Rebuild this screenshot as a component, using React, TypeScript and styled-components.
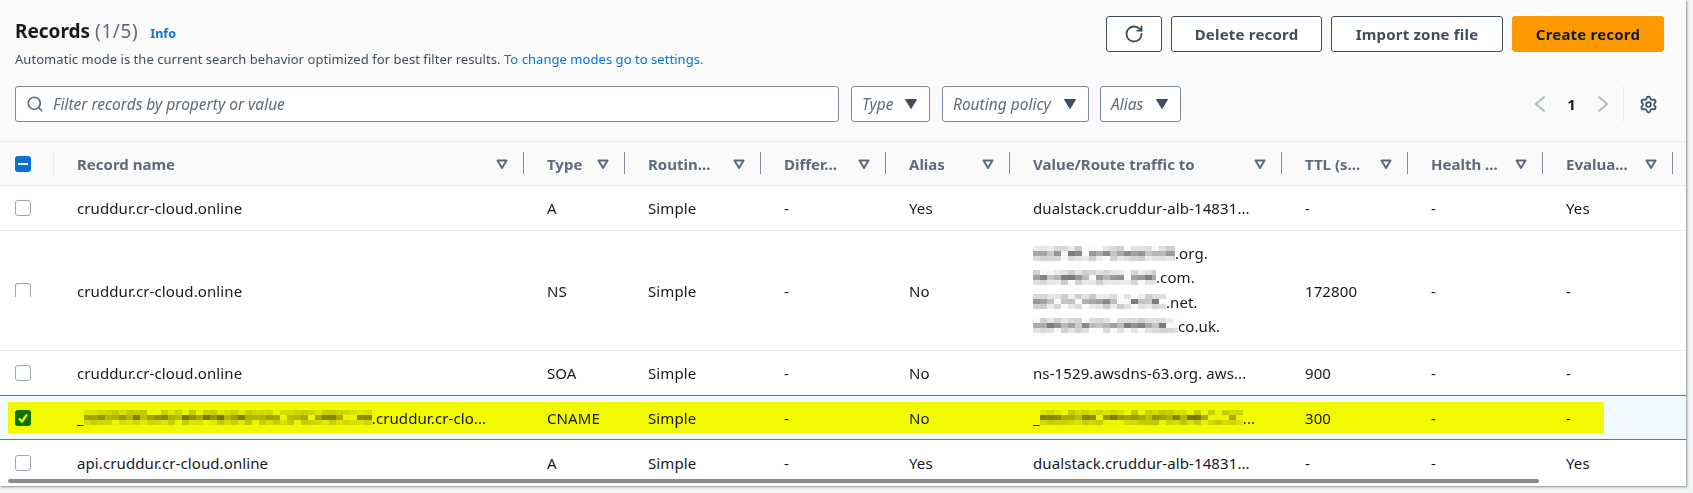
import { Search, RotateCw, Settings } from "lucide-react";
import styled, { createGlobalStyle } from "styled-components";

const GlobalStyle = createGlobalStyle`
  html, body {
    margin: 0;
    height: 493px;
    overflow: hidden;
    background: #f2f3f3;
    font-family: "Noto Sans", "Open Sans", sans-serif;
    color: #16191f;
  }
`;

const COLUMNS = "54px 470px 101px 136px 125px 124px 272px 126px 135px 130px 13px";

const headers = [
  { label: "Record name" },
  { label: "Type" },
  { label: "Routin..." },
  { label: "Differ..." },
  { label: "Alias" },
  { label: "Value/Route traffic to" },
  { label: "TTL (s..." },
  { label: "Health ..." },
  { label: "Evalua..." },
];

// pseudo random blocks, stands in for the blurred out parts of the screenshot
function Redacted({ width, seed }: { width: number; seed: number }) {
  const cell = 7;
  const cols = Math.ceil(width / cell);
  const blocks = [];
  for (let r = 0; r < 3; r++) {
    for (let c = 0; c < cols; c++) {
      const v = Math.abs(Math.sin(seed * 13.7 + c * 12.9898 + r * 78.233) * 43758.5453) % 1;
      const base = r === 1 ? 0.14 : 0.04;
      const range = r === 1 ? 0.4 : 0.16;
      blocks.push(<rect key={`${r}-${c}`} x={c * cell} y={r * 5} width={cell} height={5} fill="#000" opacity={v < 0.15 ? 0.02 : base + v * range} />);
    }
  }
  return (
    <MosaicSvg width={width} height={15} viewBox={`0 0 ${width} 15`}>
      {blocks}
    </MosaicSvg>
  );
}

function FilterIcon() {
  return (
    <SortSvg width="14" height="14" viewBox="0 0 14 14">
      <path d="M2.5 3.5h9L7 11z" fill="none" stroke="#5f6b7a" strokeWidth="2" strokeLinejoin="round" />
    </SortSvg>
  );
}

function Caret() {
  return (
    <svg width="14" height="12" viewBox="0 0 14 12">
      <path d="M1.5 1.5h11L7 10.5z" fill="#414d5c" stroke="#414d5c" strokeLinejoin="round" />
    </svg>
  );
}

function Chevron({ flip }: { flip?: boolean }) {
  return (
    <svg width="12" height="18" viewBox="0 0 12 18">
      <path d={flip ? "M1.5 1.5L10 9l-8.5 7.5" : "M10.5 1.5L2 9l8.5 7.5"} fill="none" stroke="#b0bcbe" strokeWidth="2" />
    </svg>
  );
}

function Check() {
  return (
    <svg width="12" height="12" viewBox="0 0 12 12">
      <path d="M2 6.5l3 3 5-7" fill="none" stroke="#fff" strokeWidth="2.2" />
    </svg>
  );
}

export default function App() {
  return (
    <>
      <GlobalStyle />
      <Panel>
        <Header>
          <TopRow>
            <div>
              <TitleLine>
                <Title>
                  Records <Count>(1/5)</Count>
                </Title>
                <InfoLink>Info</InfoLink>
              </TitleLine>
              <Description>
                Automatic mode is the current search behavior optimized for best filter results. <a>To change modes go to settings.</a>
              </Description>
            </div>
            <Actions>
              <Button $width={56}>
                <RotateCw size={20} strokeWidth={2.2} />
              </Button>
              <Button $width={151}>Delete record</Button>
              <Button $width={172}>Import zone file</Button>
              <Button $width={152} $primary>
                Create record
              </Button>
            </Actions>
          </TopRow>
          <FilterRow>
            <SearchBox>
              <Search size={18} strokeWidth={2.2} color="#5f6b7a" />
              <span>Filter records by property or value</span>
            </SearchBox>
            <Select $width={79}>
              Type <Caret />
            </Select>
            <Select $width={147}>
              Routing policy <Caret />
            </Select>
            <Select $width={81} $left={-1}>
              Alias <Caret />
            </Select>
            <Pager>
              <Chevron />
              <PageNumber>1</PageNumber>
              <Chevron flip />
              <PagerDivider />
              <Settings size={19} strokeWidth={2.2} color="#414d5c" />
            </Pager>
          </FilterRow>
        </Header>

        <Table>
          <HeadRow>
            <CheckCell $divider>
              <CheckBox $state="partial">
                <Dash />
              </CheckBox>
            </CheckCell>
            {headers.map((h) => (
              <HeadCell key={h.label}>
                <HeadLabel>{h.label}</HeadLabel>
                <FilterIcon />
              </HeadCell>
            ))}
          </HeadRow>

          <Row $height={45}>
            <CheckCell>
              <CheckBox />
            </CheckCell>
            <Cell>cruddur.cr-cloud.online</Cell>
            <Cell>A</Cell>
            <Cell>Simple</Cell>
            <Cell>-</Cell>
            <Cell>Yes</Cell>
            <Cell>dualstack.cruddur-alb-14831...</Cell>
            <Cell>-</Cell>
            <Cell>-</Cell>
            <Cell>Yes</Cell>
          </Row>

          <Row $height={120}>
            <CheckCell>
              <CheckBox $clipped />
            </CheckCell>
            <Cell>cruddur.cr-cloud.online</Cell>
            <Cell>NS</Cell>
            <Cell>Simple</Cell>
            <Cell>-</Cell>
            <Cell>No</Cell>
            <Cell>
              <ValueList>
                <li>
                  <Redacted width={142} seed={1} />.org.
                </li>
                <li>
                  <Redacted width={123} seed={2} />.com.
                </li>
                <li>
                  <Redacted width={133} seed={3} />.net.
                </li>
                <li>
                  <Redacted width={145} seed={4} />co.uk.
                </li>
              </ValueList>
            </Cell>
            <Cell>172800</Cell>
            <Cell>-</Cell>
            <Cell>-</Cell>
          </Row>

          <Row $height={45}>
            <CheckCell>
              <CheckBox />
            </CheckCell>
            <Cell>cruddur.cr-cloud.online</Cell>
            <Cell>SOA</Cell>
            <Cell>Simple</Cell>
            <Cell>-</Cell>
            <Cell>No</Cell>
            <Cell>ns-1529.awsdns-63.org. aws...</Cell>
            <Cell>900</Cell>
            <Cell>-</Cell>
            <Cell>-</Cell>
          </Row>

          <Row $height={44} $selected>
            <CheckCell>
              <CheckBox $state="checked">
                <Check />
              </CheckBox>
            </CheckCell>
            <Cell>
              _<Redacted width={288} seed={5} />.cruddur.cr-clo...
            </Cell>
            <Cell>CNAME</Cell>
            <Cell>Simple</Cell>
            <Cell>-</Cell>
            <Cell>No</Cell>
            <Cell>
              _<Redacted width={203} seed={6} />...
            </Cell>
            <Cell>300</Cell>
            <Cell>-</Cell>
            <Cell>-</Cell>
            <Highlight />
          </Row>

          <Row $height={46} $last>
            <CheckCell>
              <CheckBox />
            </CheckCell>
            <Cell>api.cruddur.cr-cloud.online</Cell>
            <Cell>A</Cell>
            <Cell>Simple</Cell>
            <Cell>-</Cell>
            <Cell>Yes</Cell>
            <Cell>dualstack.cruddur-alb-14831...</Cell>
            <Cell>-</Cell>
            <Cell>-</Cell>
            <Cell>Yes</Cell>
            <ScrollThumb />
          </Row>
        </Table>
      </Panel>
    </>
  );
}

const Panel = styled.div`
  width: 1686px;
  height: 486px;
  background: #fff;
  box-shadow: 1px 1px 2px rgba(0, 28, 36, 0.45);
  overflow: hidden;
`;

const Header = styled.div`
  height: 141px;
  box-sizing: border-box;
  padding: 16px 22px 0 15px;
  background: #fafafa;
`;

const TopRow = styled.div`
  display: flex;
  justify-content: space-between;
  align-items: flex-start;
  height: 70px;
`;

const TitleLine = styled.div`
  display: flex;
  align-items: baseline;
  gap: 12px;
  line-height: 26px;
  margin-top: 2px;
`;

const Title = styled.h2`
  margin: 0;
  font-size: 19px;
  font-weight: 700;
  color: #16191f;
`;

const Count = styled.span`
  font-weight: 400;
  color: #5f6b7a;
  letter-spacing: 0.6px;
`;

const InfoLink = styled.a`
  font-size: 12.5px;
  font-weight: 700;
  color: #0972d3;
`;

const Description = styled.div`
  margin-top: 3px;
  font-size: 13px;
  letter-spacing: 0.05px;
  line-height: 18px;
  color: #414d5c;

  a {
    color: #0972d3;
  }
`;

const Actions = styled.div`
  display: flex;
  gap: 9px;
`;

const Button = styled.button<{ $width: number; $primary?: boolean }>`
  width: ${(p) => p.$width}px;
  height: 36px;
  display: flex;
  align-items: center;
  justify-content: center;
  padding: 0;
  border-radius: 3px;
  border: 1px solid ${(p) => (p.$primary ? "#ff9900" : "#414d5c")};
  background: ${(p) => (p.$primary ? "#ff9900" : "#fff")};
  color: ${(p) => (p.$primary ? "#0f1b2a" : "#414d5c")};
  font-family: inherit;
  font-size: 15px;
  font-weight: 700;
  letter-spacing: 0.2px;
`;

const FilterRow = styled.div`
  display: flex;
  align-items: center;
  gap: 12px;
`;

const SearchBox = styled.div`
  width: 824px;
  height: 36px;
  box-sizing: border-box;
  display: flex;
  align-items: center;
  gap: 9px;
  padding-left: 10px;
  background: #fff;
  border: 1px solid #7d8998;
  border-radius: 3px;
  font-size: 15.5px;
  font-style: italic;
  color: #5f6b7a;
`;

const Select = styled.div<{ $width: number; $left?: number }>`
  width: ${(p) => p.$width}px;
  height: 36px;
  box-sizing: border-box;
  display: flex;
  align-items: center;
  justify-content: space-between;
  margin-left: ${(p) => p.$left ?? 0}px;
  padding: 0 11px 0 10px;
  background: #fff;
  border: 1px solid #7d8998;
  border-radius: 3px;
  font-size: 15.5px;
  font-style: italic;
  color: #5f6b7a;
`;

const Pager = styled.div`
  display: flex;
  align-items: center;
  height: 36px;
  margin-left: auto;
  padding-right: 6px;
  color: #16191f;
`;

const PageNumber = styled.span`
  width: 53px;
  text-align: center;
  font-size: 15px;
  font-weight: 700;
  margin: 0 -1px;
`;

const PagerDivider = styled.span`
  width: 1px;
  height: 36px;
  margin: 0 15px 0 14px;
  background: #e9ebed;
`;

const Table = styled.div`
  border-top: 1px solid #e9ebed;
`;

const HeadRow = styled.div`
  display: grid;
  grid-template-columns: ${COLUMNS};
  height: 44px;
  box-sizing: border-box;
  background: #fafafa;
  border-bottom: 1px solid #e9ebed;
`;

const CheckCell = styled.div<{ $divider?: boolean }>`
  display: flex;
  align-items: center;
  padding-left: 15px;
  position: relative;

  ${(p) =>
    p.$divider &&
    `
    &::after {
      content: "";
      position: absolute;
      right: 0;
      top: 10px;
      bottom: 10px;
      width: 1px;
      background: #e9ebed;
    }
  `}
`;

const CheckBox = styled.span<{ $state?: "checked" | "partial"; $clipped?: boolean }>`
  width: 16px;
  height: ${(p) => (p.$clipped ? "14px" : "16px")};
  box-sizing: border-box;
  display: flex;
  align-items: center;
  justify-content: center;
  margin-top: ${(p) => (p.$clipped ? "-1px" : "0")};
  border-radius: ${(p) => (p.$clipped ? "3px 3px 0 0" : "3px")};
  background: ${(p) => (p.$state ? "#0972d3" : "#fff")};
  border: ${(p) => (p.$state ? "none" : "1px solid #9ba7b6")};
  border-bottom: ${(p) => (p.$clipped ? "none" : "")};
`;

const Dash = styled.span`
  width: 10px;
  height: 2px;
  background: #fff;
`;

const HeadCell = styled.div`
  display: flex;
  align-items: center;
  justify-content: space-between;
  gap: 8px;
  min-width: 0;
  padding: 0 15px 0 23px;
  font-size: 15px;
  font-weight: 700;
  color: #5f6b7a;
  position: relative;

  &::after {
    content: "";
    position: absolute;
    right: 0;
    top: 10px;
    bottom: 11px;
    width: 1px;
    background: #7d8998;
  }
`;

const HeadLabel = styled.span`
  white-space: nowrap;
`;

const SortSvg = styled.svg`
  flex: none;
`;

const Row = styled.div<{ $height: number; $selected?: boolean; $last?: boolean }>`
  display: grid;
  grid-template-columns: ${COLUMNS};
  height: ${(p) => p.$height}px;
  box-sizing: border-box;
  position: relative;
  background: ${(p) => (p.$selected ? "#f1faff" : "#fff")};
  border-bottom: ${(p) => (p.$last ? "none" : p.$selected ? "1px solid #0a9bc4" : "1px solid #e9ebed")};
  box-shadow: ${(p) => (p.$selected ? "0 -1px 0 #0a9bc4" : "none")};
`;

const Cell = styled.div`
  display: flex;
  align-items: center;
  min-width: 0;
  padding-left: 23px;
  font-size: 15px;
  letter-spacing: 0.1px;
  white-space: nowrap;
  color: #16191f;
`;

const ValueList = styled.ul`
  list-style: none;
  margin: -2px 0 0;
  padding: 0;
  line-height: 24.3px;

  li {
    display: flex;
    align-items: center;
  }
`;

const MosaicSvg = styled.svg`
  flex: none;
`;

const Highlight = styled.div`
  position: absolute;
  left: 8px;
  top: 6px;
  width: 1596px;
  height: 31px;
  background: #ffff00;
  mix-blend-mode: multiply;
  pointer-events: none;
`;

const ScrollThumb = styled.div`
  position: absolute;
  left: 8px;
  top: 39px;
  width: 1531px;
  height: 4px;
  border-radius: 2px;
  background: #8a8a8a;
`;
